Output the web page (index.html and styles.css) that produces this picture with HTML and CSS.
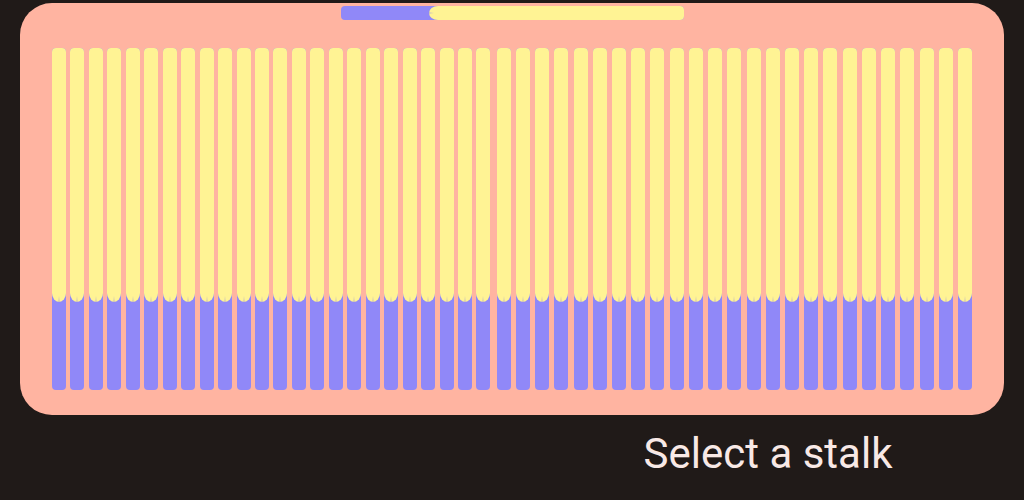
FILE: index.html
```
<!DOCTYPE html>
<html lang="en">
<head>
<meta charset="utf-8">
<meta name="viewport" content="width=device-width, initial-scale=1">
<title>Select a stalk</title>
<link rel="stylesheet" href="styles.css">
</head>
<body>
<main class="screen">
  <section class="board" aria-label="Stalks">
    <div class="stalk-laid"></div>
    <div class="stalks">
      <div class="bundle" data-count="24"></div>
      <div class="bundle" data-count="25"></div>
    </div>
  </section>
  <footer class="footer">
    <p class="prompt">Select a stalk</p>
  </footer>
</main>
<script src="script.js"></script>
</body>
</html>
```
FILE: styles.css
```
* {
  box-sizing: border-box;
}

body {
  margin: 0;
  background: #201a18;
  color: #f8e9e6;
  font-family: Roboto, "Liberation Sans", sans-serif;
}

.screen {
  display: flex;
  flex-direction: column;
  min-height: 100vh;
  padding-top: 3px;
}

.board {
  display: flex;
  flex-direction: column;
  align-items: center;
  gap: 28px;
  margin: 0 20px;
  padding: 3px 32px 25px;
  border-radius: 32px;
  background: #ffb4a1;
}

.stalk-laid {
  display: flex;
  justify-content: flex-end;
  width: 343px;
  height: 14px;
  border-radius: 4px;
  background: #9088f8;
  overflow: hidden;
}

.stalk-laid::before {
  content: "";
  width: 255px;
  border-radius: 9px 0 0 9px / 7px 0 0 7px;
  background: linear-gradient(90deg, #d9d0ad, #fff394) 0 50% / 5px 2px no-repeat #fff394;
}

.stalks {
  display: grid;
  grid-template-columns: 12fr 13fr;
  gap: 6px;
  width: 100%;
}

.bundle {
  display: flex;
  justify-content: space-between;
}

.stalk {
  display: block;
  width: 14px;
  height: 342px;
  padding: 0;
  border: 0;
  border-radius: 4px;
  background: #9088f8;
  overflow: hidden;
  cursor: pointer;
}

.stalk::before {
  content: "";
  display: block;
  height: 254px;
  margin-bottom: 88px;
  border-radius: 0 0 7px 7px / 0 0 9px 9px;
  background: linear-gradient(0deg, #d9d0ad, #fff394) 50% 100% / 2px 6px no-repeat #fff394;
}

.footer {
  display: grid;
  grid-template-columns: 1fr 1fr;
  padding-top: 15px;
}

.prompt {
  grid-column: 2;
  margin: 0;
  font-size: 42px;
  line-height: 48px;
  text-align: center;
}
```
FILE: script.js
```
document.querySelectorAll(".bundle").forEach((bundle) => {
  for (let i = 0; i < Number(bundle.dataset.count); i++) {
    const stalk = document.createElement("button");
    stalk.type = "button";
    stalk.className = "stalk";
    stalk.setAttribute("aria-label", "Stalk");
    bundle.append(stalk);
  }
});
```
